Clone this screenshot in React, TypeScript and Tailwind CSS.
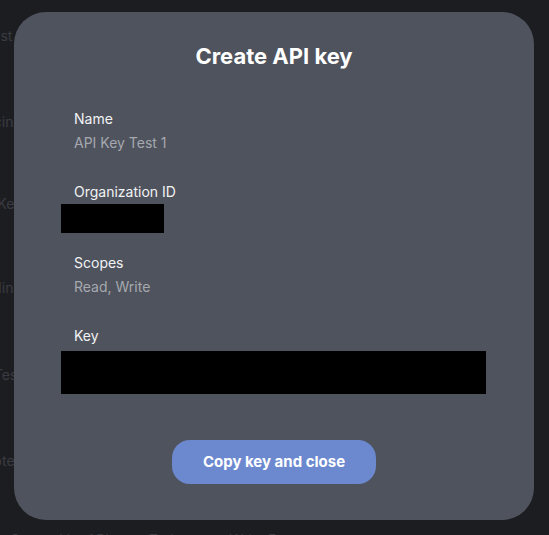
import React from 'react';

const bgRows = [
  { text: 'API Key Test 1', top: 'mt-[26px]' },
  { text: 'Pricing', top: 'mt-[66px]' },
  { text: 'API Key', top: 'mt-[62px]' },
  { text: 'Billing', top: 'mt-[64px]' },
  { text: 'Test', top: 'mt-[67px]' },
  { text: 'Notes', top: 'mt-[66px]' },
];

const Field = ({ label, value }: { label: string; value: string }) => (
  <div className="flex flex-col">
    <div className="text-[14px] leading-[20px] text-[#f1f2f4]">{label}</div>
    <div className="mt-[4px] text-[14px] leading-[20px] text-[#a5a8af]">{value}</div>
  </div>
);

export default function App() {
  return (
    <div
      className="relative w-[549px] h-[535px] overflow-hidden bg-[#1c1d21]"
      style={{ fontFamily: 'Inter, "Noto Sans", sans-serif' }}
    >
      {/* page behind the dialog */}
      <div className="flex flex-col text-[14px] leading-[20px] text-[#3a3b41]">
        {bgRows.map((row) => (
          <div key={row.text} className={`${row.top} flex justify-end w-[22px] whitespace-nowrap`}>
            {row.text}
          </div>
        ))}
        <div className="mt-[59px] flex gap-[40px] pl-[10px] whitespace-nowrap">
          <span>Created by API</span>
          <span>Today</span>
          <span>Write Docs</span>
        </div>
      </div>

      {/* dialog */}
      <div className="absolute left-[14px] top-[12px] w-[520px] h-[508px] rounded-[32px] bg-[#4f535d] flex flex-col">
        <h2 className="pt-[30px] text-center text-[22px] leading-[28px] font-bold text-white">
          Create API key
        </h2>

        <div className="mt-[39px] pl-[60px] flex flex-col">
          <Field label="Name" value="API Key Test 1" />

          <div className="mt-[29px] flex flex-col">
            <div className="text-[14px] leading-[20px] text-[#f1f2f4]">Organization ID</div>
            <div className="mt-[2px] -ml-[13px] w-[103px] h-[29px] bg-black" />
          </div>

          <div className="mt-[20px]">
            <Field label="Scopes" value="Read, Write" />
          </div>

          <div className="mt-[29px] flex flex-col">
            <div className="text-[14px] leading-[20px] text-[#f1f2f4]">Key</div>
            <div className="mt-[5px] -ml-[13px] w-[425px] h-[43px] bg-black" />
          </div>
        </div>

        <div className="mt-[46px] flex justify-center">
          <button className="w-[204px] h-[44px] rounded-[18px] bg-[#6c89d0] text-white text-[15px] font-bold">
            Copy key and close
          </button>
        </div>
      </div>
    </div>
  );
}
